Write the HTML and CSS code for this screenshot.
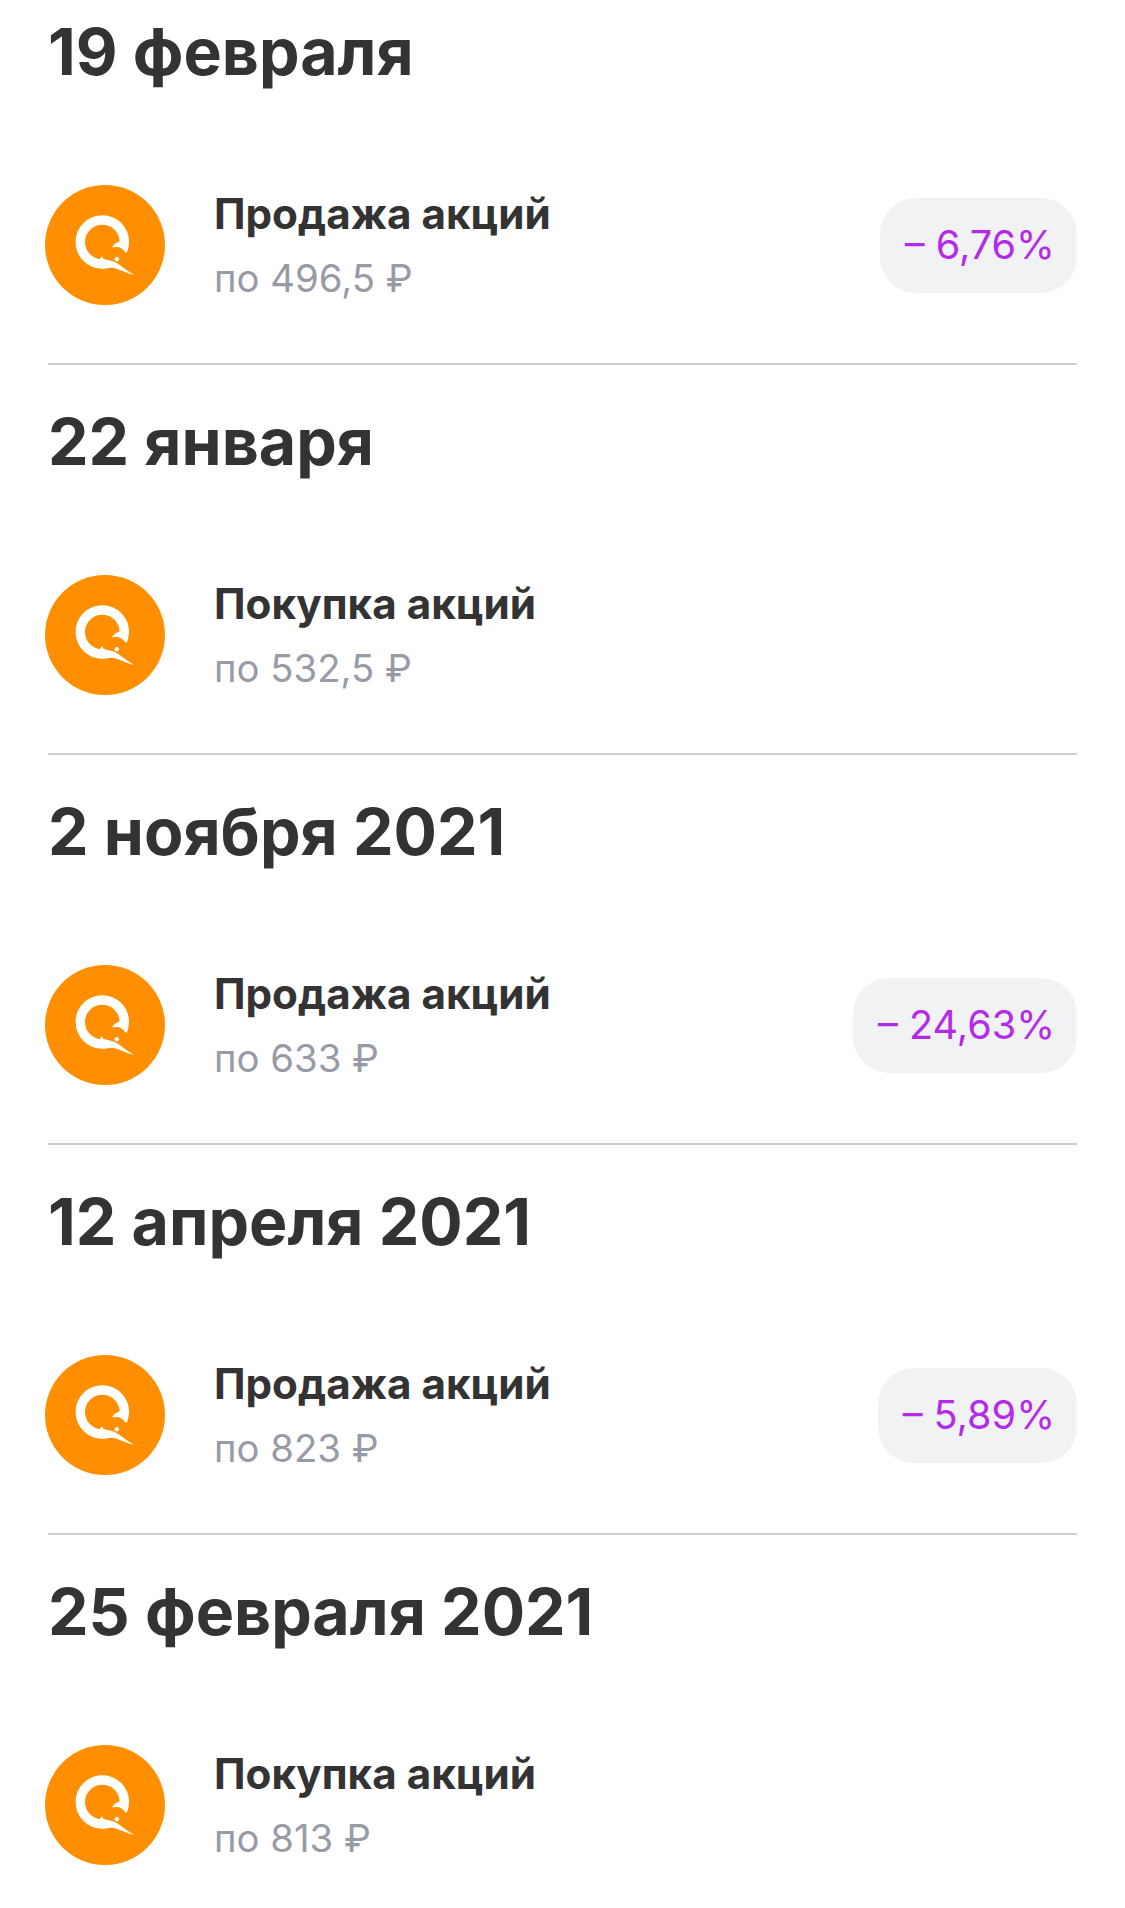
FILE: index.html
```html
<!DOCTYPE html>
<html lang="ru">
<head>
<meta charset="utf-8">
<title>Сделки</title>
<link rel="stylesheet" href="styles.css">
</head>
<body>
<svg class="defs" width="0" height="0" aria-hidden="true">
  <symbol id="qiwi" viewBox="0 0 120 120">
    <circle cx="60" cy="60" r="60" fill="#ff8f00"/>
    <circle cx="57.300" cy="57" r="22" fill="none" stroke="#fff" stroke-width="9.400"/>
    <path fill="#fff" d="M76 56C72 57 69 59 67 62L72 63L78 64Z"/>
    <path fill="#ff8f00" d="M60 75C61 68 66 62 72 62C75 62 78 64 80 67L90 72L90 85L79 85C73 79 66 76 60 75Z"/>
    <path fill="#fff" d="M54 76L56.700 71L60 76Z"/>
    <path fill="#fff" d="M56 74.500C64 74.500 70 76.500 74 79.500C79 83 84 87 89 90C83 88.500 77 85.500 71 83.500C66 82 60 83.500 56 83.800Z"/>
    <circle cx="71.800" cy="74.300" r="2.200" fill="#fff"/>
  </symbol>
</svg>
<main class="feed">
  <section class="day">
    <h2 class="date">19 февраля</h2>
    <div class="deal">
      <svg class="logo"><use href="#qiwi"/></svg>
      <div class="info"><div class="kind">Продажа акций</div><div class="price">по 496,5 ₽</div></div>
      <div class="pct">– 6,76%</div>
    </div>
  </section>
  <section class="day">
    <h2 class="date">22 января</h2>
    <div class="deal">
      <svg class="logo"><use href="#qiwi"/></svg>
      <div class="info"><div class="kind">Покупка акций</div><div class="price">по 532,5 ₽</div></div>
    </div>
  </section>
  <section class="day">
    <h2 class="date">2 ноября 2021</h2>
    <div class="deal">
      <svg class="logo"><use href="#qiwi"/></svg>
      <div class="info"><div class="kind">Продажа акций</div><div class="price">по 633 ₽</div></div>
      <div class="pct">– 24,63%</div>
    </div>
  </section>
  <section class="day">
    <h2 class="date">12 апреля 2021</h2>
    <div class="deal">
      <svg class="logo"><use href="#qiwi"/></svg>
      <div class="info"><div class="kind">Продажа акций</div><div class="price">по 823 ₽</div></div>
      <div class="pct">– 5,89%</div>
    </div>
  </section>
  <section class="day last">
    <h2 class="date">25 февраля 2021</h2>
    <div class="deal">
      <svg class="logo"><use href="#qiwi"/></svg>
      <div class="info"><div class="kind">Покупка акций</div><div class="price">по 813 ₽</div></div>
    </div>
  </section>
</main>
</body>
</html>
```
FILE: styles.css
```css
* { box-sizing: border-box; }
html, body { margin: 0; background: #fff; }
body { font-family: Inter, "Noto Sans", sans-serif; height: 1908px; overflow: hidden; }
.defs { position: absolute; }
.feed { padding: 14px 48px 0; }
.day { padding-bottom: 39px; }
.date { margin: 0 0 95px; font-size: 64.400px; line-height: 76px; font-weight: 700; color: #333; }
.deal { display: flex; align-items: center; height: 120px; margin-left: -3px; margin-bottom: 60px; position: relative; }
.deal::after { content: ""; position: absolute; left: 3px; right: 0; bottom: -60px; height: 2px; background: #cdcdcd; }
.last .deal::after { display: none; }
.logo { width: 120px; height: 120px; flex: none; }
.info { flex: 1; margin-left: 49px; }
.kind { font-size: 42.200px; line-height: 48px; font-weight: 700; color: #333; }
.price { margin-top: 17px; font-size: 38.300px; line-height: 46px; color: #979ba5; }
.pct { height: 95px; padding: 0 22px 0 25px; display: flex; align-items: center; border-radius: 36px; background: #f1f2f4; color: #b32ae8; font-size: 39.600px; }
```
